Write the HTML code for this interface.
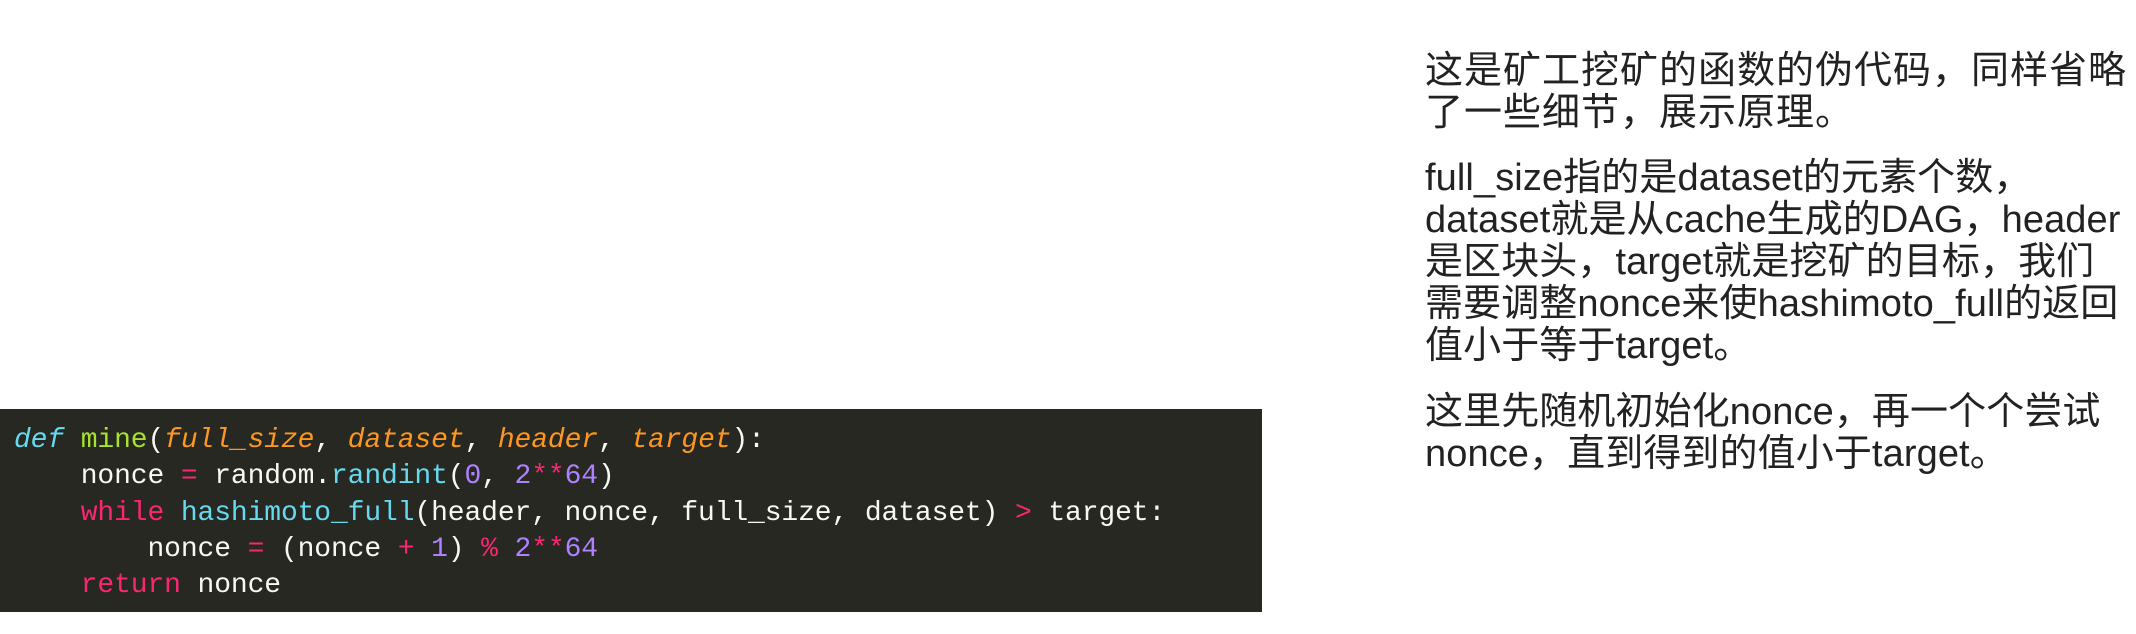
<!DOCTYPE html>
<html><head><meta charset="utf-8"><style>
body{margin:0;width:2136px;height:634px;background:#fff;position:relative;overflow:hidden}
.code{position:absolute;left:0;top:409px;width:1262px;height:203px;background:#272822;}
.code pre{margin:0;position:absolute;left:14px;top:14px;font-family:"Liberation Mono",monospace;font-size:28px;line-height:36.3px;color:#f8f8f2;letter-spacing:-0.12px}
.k{color:#66d9ef;font-style:italic}.f{color:#a6e22e}.p{color:#fd971f;font-style:italic}
.o{color:#f92672}.c{color:#66d9ef}.n{color:#ae81ff}
.t{position:absolute;left:1425px;font-family:"Liberation Sans","Noto Sans CJK SC",sans-serif;font-size:38px;line-height:42px;color:#222;white-space:nowrap;letter-spacing:0.1px}
.z{letter-spacing:1px}
</style></head><body>
<div class="code"><pre><span class="k">def</span> <span class="f">mine</span>(<span class="p">full_size</span>, <span class="p">dataset</span>, <span class="p">header</span>, <span class="p">target</span>):
    nonce <span class="o">=</span> random.<span class="c">randint</span>(<span class="n">0</span>, <span class="n">2</span><span class="o">**</span><span class="n">64</span>)
    <span class="o">while</span> <span class="c">hashimoto_full</span>(header, nonce, full_size, dataset) <span class="o">&gt;</span> target:
        nonce <span class="o">=</span> (nonce <span class="o">+</span> <span class="n">1</span>) <span class="o">%</span> <span class="n">2</span><span class="o">**</span><span class="n">64</span>
    <span class="o">return</span> nonce</pre></div>
<div class="t z" style="top:50px">这是矿工挖矿的函数的伪代码，同样省略<br>了一些细节，展示原理。</div>
<div class="t" style="top:157px">full_size指的是dataset的元素个数，<br>dataset就是从cache生成的DAG，header<br>是区块头，target就是挖矿的目标，我们<br>需要调整nonce来使hashimoto_full的返回<br>值小于等于target。</div>
<div class="t" style="top:391px">这里先随机初始化nonce，再一个个尝试<br>nonce，直到得到的值小于target。</div>
</body></html>
